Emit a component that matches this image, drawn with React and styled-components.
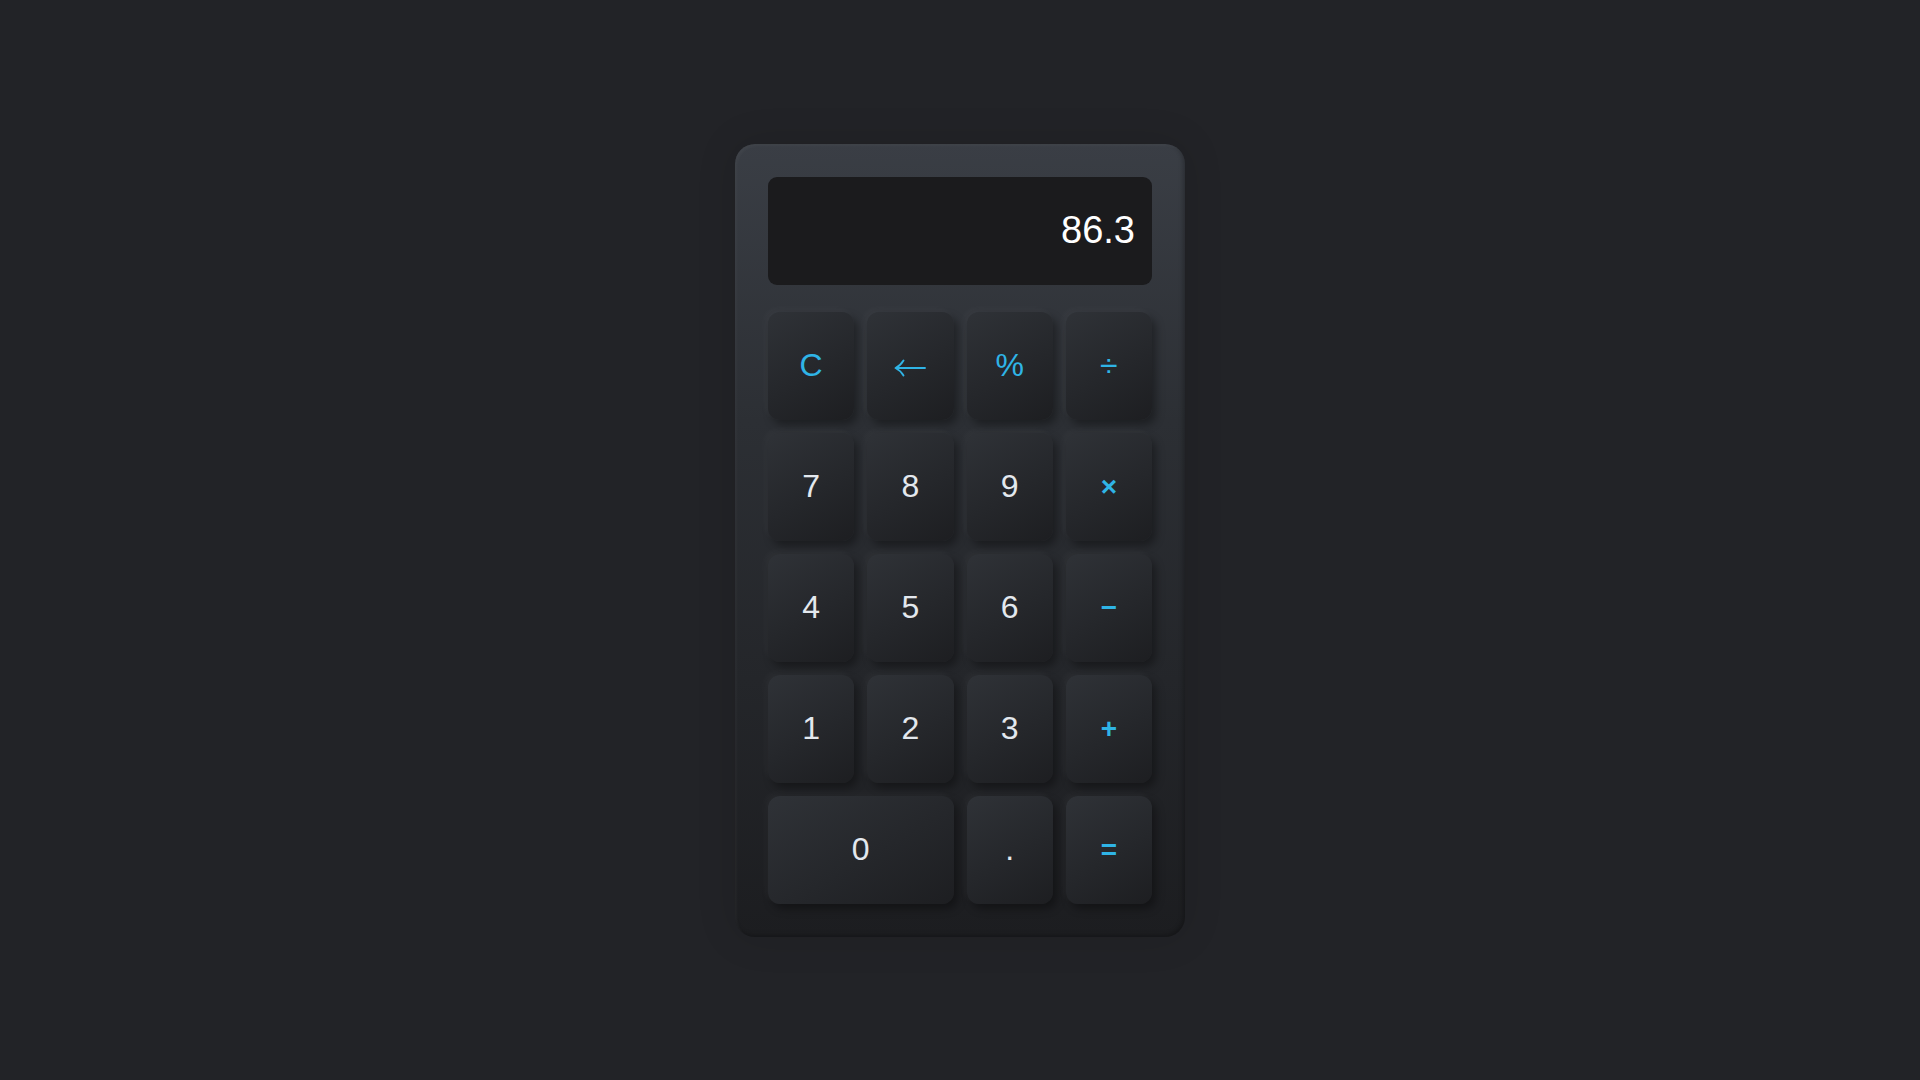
import styled, { createGlobalStyle } from 'styled-components';

const GlobalStyle = createGlobalStyle`
  html, body {
    margin: 0;
    padding: 0;
    height: 100%;
    background: #222327;
    font-family: "Liberation Sans", Arial, sans-serif;
  }
  #root {
    height: 100%;
  }
`;

function BackArrow() {
  return (
    <StArrow viewBox="0 0 32 18" aria-label="←">
      <path
        d="M31 9H2.5M9.5 1.5C7.5 4.8 5 7.3 1.5 9C5 10.7 7.5 13.2 9.5 16.5"
        fill="none"
        stroke="currentColor"
        strokeWidth="1.9"
        strokeLinecap="round"
        strokeLinejoin="round"
      />
    </StArrow>
  );
}

const keys = [
  { label: 'C', op: true },
  { label: 'back', op: true, icon: <BackArrow /> },
  { label: '%', op: true },
  { label: '÷', op: true },
  { label: '7' },
  { label: '8' },
  { label: '9' },
  { label: '×', op: true, small: true },
  { label: '4' },
  { label: '5' },
  { label: '6' },
  { label: '−', op: true, small: true },
  { label: '1' },
  { label: '2' },
  { label: '3' },
  { label: '+', op: true, small: true },
  { label: '0', wide: true },
  { label: '.' },
  { label: '=', op: true, small: true },
];

export default function App() {
  return (
    <>
      <GlobalStyle />
      <StPage>
        <StCalculator>
          <StDisplay>86.3</StDisplay>
          <StKeypad>
            {keys.map((k) => (
              <StKey key={k.label} $op={k.op} $wide={k.wide} $small={k.small}>
                {k.icon || k.label}
              </StKey>
            ))}
          </StKeypad>
        </StCalculator>
      </StPage>
    </>
  );
}

const StPage = styled.div`
  display: flex;
  align-items: center;
  justify-content: center;
  height: 100vh;
  background: #222327;
`;

const StCalculator = styled.div`
  display: flex;
  flex-direction: column;
  gap: 27px;
  box-sizing: border-box;
  width: 450px;
  padding: 33px;
  border-radius: 20px;
  background: linear-gradient(180deg, #3a3e45 0%, #2c2f34 35%, #1c1d20 100%);
  box-shadow:
    inset 2px 2px 3px rgba(255, 255, 255, 0.04),
    inset -2px -2px 4px rgba(0, 0, 0, 0.25),
    0 0 40px rgba(0, 0, 0, 0.12);
`;

const StDisplay = styled.div`
  display: flex;
  align-items: center;
  justify-content: flex-end;
  height: 108px;
  padding: 0 17px;
  border-radius: 9px;
  background: #1b1b1d;
  color: #ffffff;
  font-size: 38px;
`;

const StKeypad = styled.div`
  display: grid;
  grid-template-columns: repeat(4, 1fr);
  grid-auto-rows: 108px;
  gap: 13px;
`;

const StKey = styled.button`
  display: flex;
  align-items: center;
  justify-content: center;
  grid-column: ${({ $wide }) => ($wide ? 'span 2' : 'auto')};
  border: none;
  border-radius: 12px;
  padding: 0;
  background: linear-gradient(150deg, #2f3237 0%, #25272b 55%, #1d1e21 100%);
  box-shadow:
    4px 5px 9px rgba(0, 0, 0, 0.35),
    -3px -3px 7px rgba(255, 255, 255, 0.035);
  color: ${({ $op }) => ($op ? '#2fb4e6' : '#e3e8ee')};
  font-family: "Liberation Sans", Arial, sans-serif;
  font-size: ${({ $small }) => ($small ? '28px' : '32px')};
  font-weight: ${({ $small }) => ($small ? 700 : 400)};
  cursor: pointer;
`;

const StArrow = styled.svg`
  width: 32px;
  height: 18px;
  margin-top: 4px;
`;
